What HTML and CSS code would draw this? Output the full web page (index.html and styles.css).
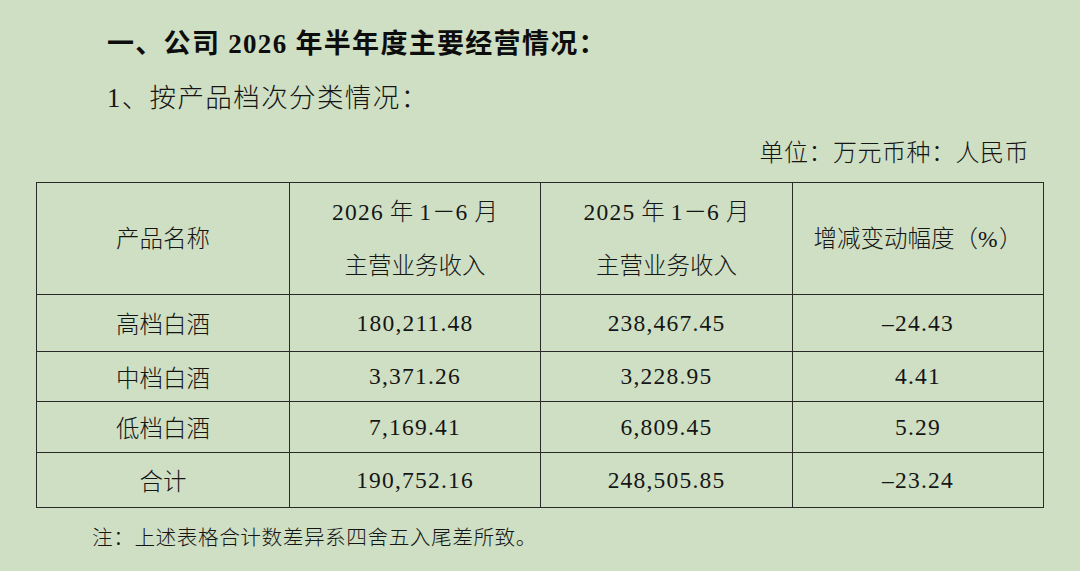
FILE: index.html
```html
<!DOCTYPE html>
<html lang="zh-CN">
<head>
<meta charset="utf-8">
<title>公司2026年半年度主要经营情况</title>
<link rel="stylesheet" href="styles.css">
</head>
<body>
<div class="page">
  <h1 class="title">一、公司 2026 年半年度主要经营情况：</h1>
  <h2 class="subtitle">1、按产品档次分类情况：</h2>
  <div class="unit">单位：万元币种：人民币</div>
  <table class="data">
    <colgroup>
      <col class="c1"><col class="c2"><col class="c3"><col class="c4">
    </colgroup>
    <tr class="head">
      <td>产品名称</td>
      <td><span class="num">2026</span> 年 <span class="num">1</span>－<span class="num">6</span> 月<br>主营业务收入</td>
      <td><span class="num">2025</span> 年 <span class="num">1</span>－<span class="num">6</span> 月<br>主营业务收入</td>
      <td>增减变动幅度（<span class="num">%</span>）</td>
    </tr>
    <tr class="r1">
      <td>高档白酒</td>
      <td class="num">180,211.48</td>
      <td class="num">238,467.45</td>
      <td class="num">–24.43</td>
    </tr>
    <tr class="r2">
      <td>中档白酒</td>
      <td class="num">3,371.26</td>
      <td class="num">3,228.95</td>
      <td class="num">4.41</td>
    </tr>
    <tr class="r3">
      <td>低档白酒</td>
      <td class="num">7,169.41</td>
      <td class="num">6,809.45</td>
      <td class="num">5.29</td>
    </tr>
    <tr class="r4">
      <td>合计</td>
      <td class="num">190,752.16</td>
      <td class="num">248,505.85</td>
      <td class="num">–23.24</td>
    </tr>
  </table>
  <p class="note">注：上述表格合计数差异系四舍五入尾差所致。</p>
</div>
</body>
</html>
```

FILE: styles.css
```css
html, body {
  margin: 0;
  padding: 0;
  background: #cfdfc4;
}
body {
  font-family: "Liberation Serif", "Noto Sans CJK SC", serif;
  color: #151515;
  width: 1080px;
  height: 571px;
  overflow: hidden;
}
.page {
  padding: 17px 37px 0 36px;
}
.title {
  margin: 0 0 0 71px;
  font-size: 27px;
  line-height: 54px;
  font-weight: 700;
  letter-spacing: 1.3px;
  color: #0d0d0d;
}
.subtitle {
  margin: 0 0 0 71px;
  font-size: 26.5px;
  line-height: 54px;
  font-weight: 300;
  letter-spacing: 1.4px;
}
.unit {
  font-size: 24px;
  line-height: 57px;
  height: 57px;
  text-align: right;
  padding-right: 14px;
  letter-spacing: 0.5px;
  font-weight: 300;
}
.data {
  width: 1007px;
  border-collapse: collapse;
  table-layout: fixed;
  font-size: 23.5px;
  font-weight: 300;
}
.data td {
  border: 1px solid #2a2a2a;
  text-align: center;
  vertical-align: middle;
  padding: 0;
}
.c1 { width: 253px; }
.c2 { width: 251px; }
.c3 { width: 252px; }
.c4 { width: 251px; }
.head td { height: 111px; line-height: 54px; }
.r1 td { height: 56px; }
.r2 td { height: 49px; }
.r3 td { height: 50px; }
.r4 td { height: 54px; }
.num {
  font-family: "Liberation Serif", serif;
  font-weight: 400;
  letter-spacing: 1.2px;
}
.note {
  margin: 10px 0 0 56px;
  font-size: 20.7px;
  line-height: 40px;
  letter-spacing: 0.5px;
  font-weight: 300;
}
```
